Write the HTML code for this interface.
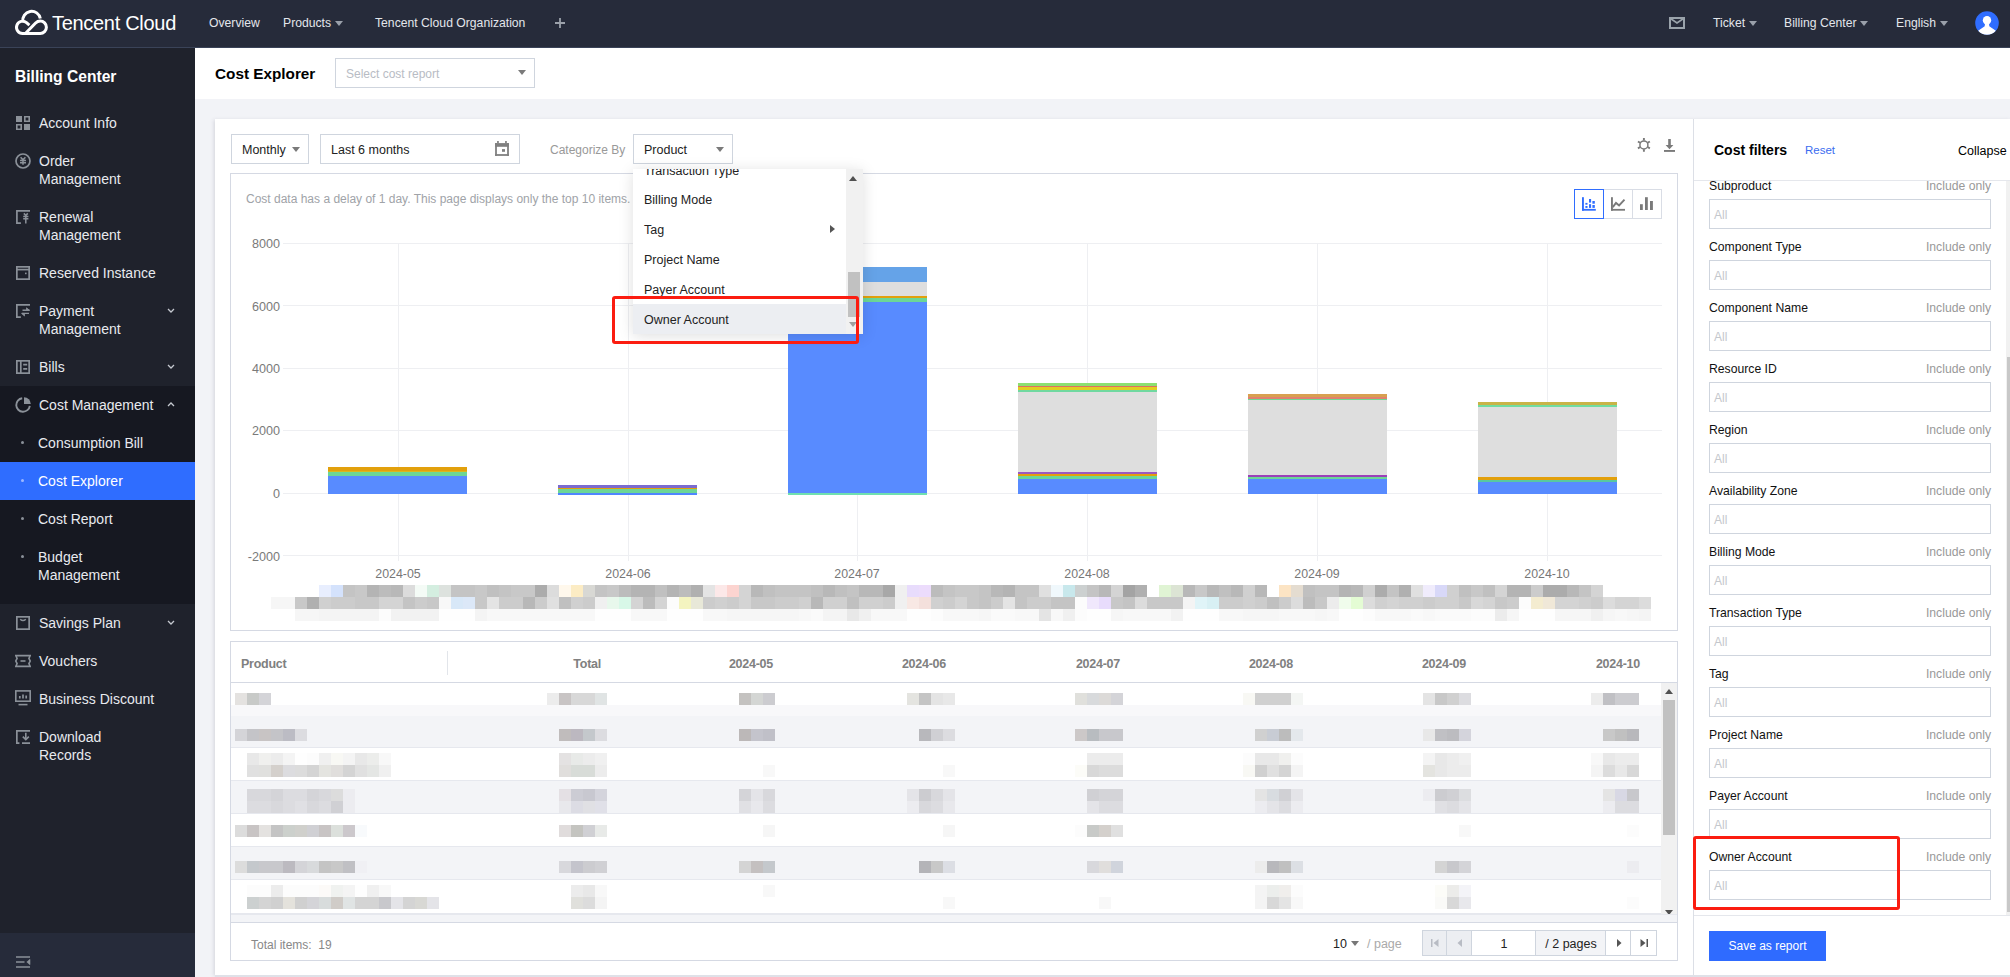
<!DOCTYPE html>
<html><head><meta charset="utf-8">
<style>
*{box-sizing:border-box;margin:0;padding:0}
html,body{width:2010px;height:977px;overflow:hidden;background:#f2f3f7;font-family:"Liberation Sans",sans-serif;color:#000}
.a{position:absolute}
#top{left:0;top:0;width:2010px;height:48px;background:#262b3a;border-bottom:1px solid #3a4358}
#top .n{position:absolute;top:16px;font-size:12.2px;color:#e3e6eb;white-space:nowrap}
.car{display:inline-block;width:0;height:0;border-left:4px solid transparent;border-right:4px solid transparent;border-top:5px solid #9aa0aa;vertical-align:middle;margin-left:4px}
#side{left:0;top:48px;width:195px;height:929px;background:#1f222c}
#side .it{position:absolute;left:39px;font-size:14px;color:#e8eaef;line-height:18px;white-space:nowrap}
#side .ic{position:absolute;left:16px;width:14px;height:14px}
#hdr{left:195px;top:48px;width:1815px;height:51px;background:#fff}
.tri{width:0;height:0;border-left:4px solid transparent;border-right:4px solid transparent;border-top:5px solid #7a7a7a}
.box{position:absolute;background:#fff;border:1px solid #cfd5de}
</style><style>
.ylab{left:240px;width:40px;text-align:right;font-size:12.6px;color:#7a7a7a;margin-top:0px}
.xlab{width:80px;text-align:center;font-size:12.4px;color:#777}
.th{font-size:12.5px;font-weight:bold;color:#808080;letter-spacing:-0.25px}
.flab{left:1709px;font-size:12.2px;color:#111}
.finc{left:1891px;width:100px;text-align:right;font-size:12.2px;color:#999}
.finp{left:1709px;width:282px;height:30px;border:1px solid #cfd5de;background:#fff}
.finp span{position:absolute;left:4px;top:8px;font-size:12px;color:#c4c7cc}
.ddi{left:11px;font-size:12.5px;color:#222;white-space:nowrap}
</style></head><body>
<div id="top" class="a">
  <svg class="a" style="left:0;top:0" width="50" height="48" viewBox="0 0 50 48" fill="none" stroke="#fff" stroke-width="3"><path d="M29.4 25.1L26.5 22.6A6.1 6.1 0 1 0 22.6 33.4H40.2A6.2 6.2 0 0 0 40.2 21Q37.6 21 35.6 23L25.6 33.2"/><path d="M22.9 21.6A8.7 8.7 0 0 1 40.3 18.6"/></svg>
  <svg class="a" style="left:1668px;top:16px" width="18" height="14" viewBox="0 0 18 14" fill="none" stroke="#9aa3ab" stroke-width="2"><rect x="2" y="2" width="14" height="10"/><path d="M2.5 2.5L9 7l6.5-4.5" stroke-width="1.6"/></svg>
  <svg class="a" style="left:1975px;top:11px" width="24" height="24" viewBox="0 0 24 24"><circle cx="12" cy="12" r="11.8" fill="#2f6dff"/><g fill="#fff"><ellipse cx="12" cy="9.2" rx="4.2" ry="4.3"/><path d="M10 12.6H14L14.3 15.2L20.85 19.8A11.8 11.8 0 0 1 3.15 19.8L9.7 15.2Z"/></g></svg>
  <div class="a" style="left:52px;top:12px;font-size:20px;color:#fff;letter-spacing:-0.3px">Tencent Cloud</div>
  <div class="n" style="left:209px">Overview</div>
  <div class="n" style="left:283px">Products<span class="car"></span></div>
  <div class="n" style="left:375px">Tencent Cloud Organization</div>
  <svg class="a" style="left:554px;top:17px" width="12" height="12" viewBox="0 0 12 12" stroke="#9ba1aa" stroke-width="1.8"><path d="M6 1v10M1 6h10"/></svg>
  <div class="n" style="left:1713px">Ticket<span class="car"></span></div>
  <div class="n" style="left:1784px">Billing Center<span class="car"></span></div>
  <div class="n" style="left:1896px">English<span class="car"></span></div>
  
</div>
<div id="side" class="a">
  <div class="a" style="left:15px;top:20px;font-size:15.6px;font-weight:bold;color:#fff">Billing Center</div>
  <div class="a" style="left:0;top:338px;width:195px;height:218px;background:#161821"></div>
  <div class="a" style="left:0;top:414px;width:195px;height:38px;background:#2f6dff"></div>
  <div class="a" style="left:0;top:885px;width:195px;height:44px;background:#262b3a"></div>
  <!-- icons -->
  <svg class="ic" style="top:68px" viewBox="0 0 14 14" fill="#8b9199"><rect x="0" y="0" width="6" height="6"/><path d="M8 0h6v6h-6zM9.6 1.6v2.8h2.8v-2.8z" fill-rule="evenodd"/><path d="M0 8h6v6h-6zM1.6 9.6v2.8h2.8v-2.8z" fill-rule="evenodd"/><rect x="8" y="8" width="6" height="6"/></svg>
  <svg class="ic" style="top:105px;left:15px;width:16px;height:16px" viewBox="0 0 16 16" fill="none" stroke="#8b9199" stroke-width="1.7"><circle cx="8" cy="8" r="7"/><path d="M5.6 4.2l2.4 2.6 2.4-2.6M5 7.4h6M5 9.7h6M8 6.8v5" stroke-width="1.5"/></svg>
  <svg class="ic" style="top:162px" viewBox="0 0 14 14" fill="none" stroke="#8b9199" stroke-width="1.7"><path d="M14 0.9H0.9v12.2h4"/><path d="M7.8 3.4l2 2 2-2M7.2 6.4h5.2M7.2 8.8h5.2M9.8 5.4v8" stroke-width="1.5"/></svg>
  <svg class="ic" style="top:218px" viewBox="0 0 14 14" fill="none" stroke="#8b9199" stroke-width="1.7"><rect x="0.85" y="0.85" width="12.3" height="12.3"/><path d="M0.85 3.6h12.3"/><rect x="9" y="6.6" width="1.6" height="1.6" fill="#8b9199" stroke="none"/></svg>
  <svg class="ic" style="top:256px" viewBox="0 0 14 14" fill="none" stroke="#8b9199" stroke-width="1.7"><path d="M14 0.85H0.85v12.3h4"/><path d="M6.5 6.3h7M13 9.4h-7" stroke-width="1.4"/><path d="M10.5 3.8l3 2.5h-3zM8.5 12l-3-2.6h3z" fill="#8b9199" stroke-width="0.8"/></svg>
  <svg class="ic" style="top:312px" viewBox="0 0 14 14" fill="none" stroke="#8b9199" stroke-width="1.7"><rect x="0.85" y="0.85" width="12.3" height="12.3"/><path d="M4.8 0.85v12.3M7.2 4.6h4M7.2 8.8h4"/></svg>
  <svg class="ic" style="top:349px;left:15px;width:16px;height:16px" viewBox="0 0 16 16"><path d="M7.2 1.2A6.8 6.8 0 1 0 14.8 8.8" fill="none" stroke="#8b9199" stroke-width="1.9"/><path d="M9 0.2V7h6.8A6.8 6.8 0 0 0 9 0.2z" fill="#8b9199"/></svg>
  <svg class="ic" style="top:568px" viewBox="0 0 14 14" fill="none" stroke="#8b9199" stroke-width="1.7"><rect x="0.85" y="0.85" width="12.3" height="12.3"/><path d="M4.2 3.2q2.8 2.6 5.6 0" stroke-width="1.5"/></svg>
  <svg class="ic" style="top:606px;left:15px;width:16px;height:14px" viewBox="0 0 16 14" fill="none" stroke="#8b9199" stroke-width="1.6"><path d="M0.8 1.6h14.4l-1.3 2.8 1.3 2.6-1.3 2.6 1.3 2.8H0.8l1.3-2.8L0.8 7l1.3-2.6z"/><path d="M5.5 7h5"/></svg>
  <svg class="ic" style="top:642px;left:15px;width:16px;height:16px" viewBox="0 0 16 16" fill="none" stroke="#8b9199" stroke-width="1.6"><rect x="0.8" y="0.9" width="14.4" height="10.3"/><path d="M3.5 14.6h9"/><path d="M4.8 8.5v-2.5M8 8.5v-4M11.2 8.5v-3" stroke-width="1.7"/></svg>
  <svg class="ic" style="top:682px" viewBox="0 0 14 14" fill="none" stroke="#8b9199" stroke-width="1.7"><path d="M14 0.85H0.85v12.3h2.6M6 13.1h8"/><path d="M9.8 2.8v6.6" stroke-width="1.6"/><path d="M6.8 6.6l3 3 3-3" stroke-width="1.6"/></svg>
  <svg class="a" style="left:16px;top:908px" width="15" height="12" viewBox="0 0 15 12" fill="none" stroke="#8b9199" stroke-width="1.6"><path d="M0 1h14M0 6h8.5M0 11h14"/><path d="M14 3.3l-3.2 2.7 3.2 2.7z" fill="#8b9199" stroke-width="0.6"/></svg>
  <!-- chevrons -->
  <svg class="a" style="left:167px;top:260px" width="8" height="5" viewBox="0 0 8 5" fill="none" stroke="#c5c9d0" stroke-width="1.3"><path d="M1 1l3 3 3-3"/></svg>
  <svg class="a" style="left:167px;top:316px" width="8" height="5" viewBox="0 0 8 5" fill="none" stroke="#c5c9d0" stroke-width="1.3"><path d="M1 1l3 3 3-3"/></svg>
  <svg class="a" style="left:167px;top:354px" width="8" height="5" viewBox="0 0 8 5" fill="none" stroke="#c5c9d0" stroke-width="1.3"><path d="M1 4l3-3 3 3"/></svg>
  <svg class="a" style="left:167px;top:572px" width="8" height="5" viewBox="0 0 8 5" fill="none" stroke="#c5c9d0" stroke-width="1.3"><path d="M1 1l3 3 3-3"/></svg>
  <!-- bullets -->
  <div class="a" style="left:21px;top:393px;width:3px;height:3px;background:#8a9099;border-radius:50%"></div>
  <div class="a" style="left:21px;top:431px;width:3px;height:3px;background:#9db8ff;border-radius:50%"></div>
  <div class="a" style="left:21px;top:469px;width:3px;height:3px;background:#8a9099;border-radius:50%"></div>
  <div class="a" style="left:21px;top:507px;width:3px;height:3px;background:#8a9099;border-radius:50%"></div>
  <!-- text -->
  <div class="it" style="top:66px">Account Info</div>
  <div class="it" style="top:104px">Order<br>Management</div>
  <div class="it" style="top:160px">Renewal<br>Management</div>
  <div class="it" style="top:216px">Reserved Instance</div>
  <div class="it" style="top:254px">Payment<br>Management</div>
  <div class="it" style="top:310px">Bills</div>
  <div class="it" style="top:348px">Cost Management</div>
  <div class="it" style="top:386px;left:38px">Consumption Bill</div>
  <div class="it" style="top:424px;left:38px;color:#fff">Cost Explorer</div>
  <div class="it" style="top:462px;left:38px">Cost Report</div>
  <div class="it" style="top:500px;left:38px">Budget<br>Management</div>
  <div class="it" style="top:566px">Savings Plan</div>
  <div class="it" style="top:604px">Vouchers</div>
  <div class="it" style="top:642px">Business Discount</div>
  <div class="it" style="top:680px">Download<br>Records</div>
</div>
<div id="hdr" class="a">
  <div class="a" style="left:20px;top:17px;font-size:15.3px;font-weight:bold">Cost Explorer</div>
  <div class="box" style="left:140px;top:10px;width:200px;height:30px">
    <div class="a" style="left:10px;top:8px;font-size:12px;color:#b8bcc4">Select cost report</div>
    <div class="a tri" style="left:182px;top:11px"></div>
  </div>
</div>
<!-- main card -->
<div class="a" style="left:215px;top:119px;width:1795px;height:856px;background:#fff;box-shadow:-1px 1px 4px rgba(54,58,80,0.16)"></div>
<div class="a" style="left:215px;top:975px;width:1795px;height:2px;background:#dfe1e8"></div>
<!-- toolbar -->
<div class="box" style="left:231px;top:134px;width:78px;height:30px">
  <div class="a" style="left:10px;top:8px;font-size:12.5px;color:#222">Monthly</div>
  <div class="a tri" style="left:60px;top:12px"></div>
</div>
<div class="box" style="left:320px;top:134px;width:200px;height:30px">
  <div class="a" style="left:10px;top:8px;font-size:12.5px;color:#222">Last 6 months</div>
  <svg class="a" style="left:173px;top:5px" width="18" height="18" fill="#808080"><rect x="1.1" y="3.1" width="13.8" height="3.7"/><rect x="1.1" y="3.1" width="1.8" height="12.8"/><rect x="13.1" y="3.1" width="1.8" height="12.8"/><rect x="1.1" y="14.1" width="13.8" height="1.8"/><rect x="3.1" y="1.0" width="1.7" height="2.5"/><rect x="11.1" y="1.0" width="1.7" height="2.5"/><rect x="8.0" y="9.1" width="3.0" height="2.7"/></svg>
</div>
<div class="a" style="left:550px;top:143px;font-size:12px;color:#999">Categorize By</div>
<div class="box" style="left:633px;top:134px;width:100px;height:30px">
  <div class="a" style="left:10px;top:8px;font-size:12.5px;color:#222">Product</div>
  <div class="a tri" style="left:82px;top:12px"></div>
</div>
<svg class="a" style="left:1636px;top:137px" width="16" height="16" viewBox="0 0 16 16" fill="none" stroke="#7a7a7a"><circle cx="7.9" cy="7.9" r="4" stroke-width="1.5"/><path d="M7.90 3.60L7.90 1.00M11.62 5.75L13.88 4.45M11.62 10.05L13.88 11.35M7.90 12.20L7.90 14.80M4.18 5.75L1.92 4.45M4.18 10.05L1.92 11.35" stroke-width="1.9"/></svg>
<svg class="a" style="left:1663px;top:138px" width="14" height="15" viewBox="0 0 14 15" fill="#7a7a7a"><rect x="5.2" y="1" width="2.6" height="7"/><path d="M2.6 7h7.8L6.5 11.2z"/><rect x="1" y="12" width="11" height="1.9"/></svg>
<!-- chart container -->
<div class="a" style="left:230px;top:173px;width:1448px;height:458px;border:1px solid #d5d9e3"></div>
<div class="a" style="left:246px;top:192px;font-size:12px;color:#a0a3a8">Cost data has a delay of 1 day. This page displays only the top 10 items.</div>
<div class="a" style="left:1574px;top:189px;width:88px;height:30px;border:1px solid #d9dde5"></div>
<div class="a" style="left:1603px;top:189px;width:1px;height:30px;background:#d9dde5"></div>
<div class="a" style="left:1632px;top:189px;width:1px;height:30px;background:#d9dde5"></div>
<div class="a" style="left:1574px;top:189px;width:30px;height:30px;border:1px solid #2f6dff"></div>
<svg class="a" style="left:1565px;top:182px" width="105" height="43"><g fill="#2f6dff"><rect x="17.0" y="15.2" width="1.9" height="13.5"/><rect x="17.0" y="26.9" width="13.8" height="1.8"/><rect x="20.4" y="20.9" width="2.1" height="1.8"/><rect x="20.4" y="24.0" width="2.1" height="1.9"/><rect x="24.0" y="17.0" width="2.1" height="3.6"/><rect x="24.0" y="22.2" width="2.1" height="3.7"/><rect x="27.4" y="19.0" width="2.4" height="2.7"/><rect x="27.4" y="23.0" width="2.4" height="2.9"/></g><g fill="#7a7a7a"><rect x="46.0" y="15.2" width="1.9" height="13.5"/><rect x="46.0" y="26.9" width="14.0" height="1.8"/><rect x="75.0" y="22.2" width="2.8" height="5.8"/><rect x="80.0" y="15.2" width="2.8" height="12.8"/><rect x="85.0" y="19.0" width="2.9" height="9.0"/></g><path d="M47.8 25.1L51.0 20.9L54.1 23.5L59.5 17.6" fill="none" stroke="#7a7a7a" stroke-width="1.9"/></svg>
<!-- table container -->
<div class="a" style="left:230px;top:641px;width:1448px;height:320px;border:1px solid #d5d9e3"></div>
<!-- filter panel -->
<div class="a" style="left:1693px;top:119px;width:1px;height:856px;background:#dcdfe6"></div>
<div class="a" style="left:1694px;top:180px;width:316px;height:1px;background:#e5e7ec"></div>
<div class="a" style="left:1714px;top:142px;font-size:14px;font-weight:bold;color:#000">Cost filters</div>
<div class="a" style="left:1805px;top:144px;font-size:11.5px;color:#3b6cf0">Reset</div>
<div class="a" style="left:1958px;top:144px;font-size:12.5px;color:#000">Collapse</div>
<div class="a" style="left:2006px;top:181px;width:4px;height:734px;background:#f1f1f1"></div>
<div class="a" style="left:2007px;top:357px;width:3px;height:555px;background:#c8c8c8"></div>
<div class="a" style="left:1694px;top:915px;width:316px;height:1px;background:#e5e7ec"></div>
<div class="a" style="left:1709px;top:931px;width:117px;height:30px;background:#2f6bff;color:#fff;font-size:12px;text-align:center;line-height:30px">Save as report</div>
<div class="a" style="left:283px;top:242.5px;width:1379px;height:1px;background:#eeeff2"></div>
<div class="a ylab" style="top:237px">8000</div>
<div class="a" style="left:283px;top:305.0px;width:1379px;height:1px;background:#eeeff2"></div>
<div class="a ylab" style="top:300px">6000</div>
<div class="a" style="left:283px;top:367.5px;width:1379px;height:1px;background:#eeeff2"></div>
<div class="a ylab" style="top:362px">4000</div>
<div class="a" style="left:283px;top:430.0px;width:1379px;height:1px;background:#eeeff2"></div>
<div class="a ylab" style="top:424px">2000</div>
<div class="a" style="left:283px;top:492.5px;width:1379px;height:1px;background:#eeeff2"></div>
<div class="a ylab" style="top:487px">0</div>
<div class="a" style="left:283px;top:555.0px;width:1379px;height:1px;background:#eeeff2"></div>
<div class="a ylab" style="top:550px">-2000</div>
<div class="a" style="left:398px;top:243px;width:1px;height:318px;background:#eeeff2"></div>
<div class="a xlab" style="left:358px;top:567px">2024-05</div>
<div class="a" style="left:628px;top:243px;width:1px;height:318px;background:#eeeff2"></div>
<div class="a xlab" style="left:588px;top:567px">2024-06</div>
<div class="a" style="left:857px;top:243px;width:1px;height:318px;background:#eeeff2"></div>
<div class="a xlab" style="left:817px;top:567px">2024-07</div>
<div class="a" style="left:1087px;top:243px;width:1px;height:318px;background:#eeeff2"></div>
<div class="a xlab" style="left:1047px;top:567px">2024-08</div>
<div class="a" style="left:1317px;top:243px;width:1px;height:318px;background:#eeeff2"></div>
<div class="a xlab" style="left:1277px;top:567px">2024-09</div>
<div class="a" style="left:1547px;top:243px;width:1px;height:318px;background:#eeeff2"></div>
<div class="a xlab" style="left:1507px;top:567px">2024-10</div>
<div class="a" style="left:328px;top:467.0px;width:139px;height:3.5px;background:#e2a00c"></div>
<div class="a" style="left:328px;top:470.5px;width:139px;height:1.5px;background:#d8b820"></div>
<div class="a" style="left:328px;top:472.0px;width:139px;height:4.0px;background:#6cd696"></div>
<div class="a" style="left:328px;top:476.0px;width:139px;height:18.0px;background:#588bff"></div>
<div class="a" style="left:558px;top:485.0px;width:139px;height:3.0px;background:#7b6bd0"></div>
<div class="a" style="left:558px;top:488.0px;width:139px;height:1.0px;background:#e2a00c"></div>
<div class="a" style="left:558px;top:489.0px;width:139px;height:4.0px;background:#6cd696"></div>
<div class="a" style="left:558px;top:493.0px;width:139px;height:2.0px;background:#4f86ff"></div>
<div class="a" style="left:788px;top:266.5px;width:139px;height:15.5px;background:#65a3e8"></div>
<div class="a" style="left:788px;top:282.0px;width:139px;height:14.0px;background:#dedede"></div>
<div class="a" style="left:788px;top:296.0px;width:139px;height:2.0px;background:#e2a00c"></div>
<div class="a" style="left:788px;top:298.0px;width:139px;height:4.0px;background:#6cd696"></div>
<div class="a" style="left:788px;top:302.0px;width:139px;height:191.0px;background:#588bff"></div>
<div class="a" style="left:788px;top:493.0px;width:139px;height:2.0px;background:#6fe0b0"></div>
<div class="a" style="left:1018px;top:383.0px;width:139px;height:3.0px;background:#8ce070"></div>
<div class="a" style="left:1018px;top:386.0px;width:139px;height:1.0px;background:#e07060"></div>
<div class="a" style="left:1018px;top:387.0px;width:139px;height:3.0px;background:#e0d020"></div>
<div class="a" style="left:1018px;top:390.0px;width:139px;height:2.0px;background:#70d8a0"></div>
<div class="a" style="left:1018px;top:392.0px;width:139px;height:80.0px;background:#dedede"></div>
<div class="a" style="left:1018px;top:472.0px;width:139px;height:2.0px;background:#9b58c0"></div>
<div class="a" style="left:1018px;top:474.0px;width:139px;height:2.0px;background:#e2a00c"></div>
<div class="a" style="left:1018px;top:476.0px;width:139px;height:3.0px;background:#6cd696"></div>
<div class="a" style="left:1018px;top:479.0px;width:139px;height:15.0px;background:#588bff"></div>
<div class="a" style="left:1248px;top:394.0px;width:139px;height:3.0px;background:#d8a050"></div>
<div class="a" style="left:1248px;top:397.0px;width:139px;height:1.5px;background:#e08070"></div>
<div class="a" style="left:1248px;top:398.5px;width:139px;height:1.0px;background:#70d890"></div>
<div class="a" style="left:1248px;top:399.5px;width:139px;height:75.5px;background:#dedede"></div>
<div class="a" style="left:1248px;top:475.0px;width:139px;height:2.0px;background:#9b40b8"></div>
<div class="a" style="left:1248px;top:477.0px;width:139px;height:2.0px;background:#6cd696"></div>
<div class="a" style="left:1248px;top:479.0px;width:139px;height:15.0px;background:#588bff"></div>
<div class="a" style="left:1478px;top:402.0px;width:139px;height:3.0px;background:#c8b448"></div>
<div class="a" style="left:1478px;top:405.0px;width:139px;height:2.0px;background:#70dca0"></div>
<div class="a" style="left:1478px;top:407.0px;width:139px;height:70.0px;background:#dedede"></div>
<div class="a" style="left:1478px;top:477.0px;width:139px;height:3.0px;background:#e2a00c"></div>
<div class="a" style="left:1478px;top:480.0px;width:139px;height:1.5px;background:#58c8a0"></div>
<div class="a" style="left:1478px;top:481.5px;width:139px;height:12.5px;background:#588bff"></div>
<svg class="a" style="left:235px;top:585px" width="1430" height="36" shape-rendering="crispEdges"><rect x="84" y="0" width="12" height="12" fill="#e8eefe"/><rect x="96" y="0" width="12" height="12" fill="#d4e2fc"/><rect x="108" y="0" width="12" height="12" fill="#c4c4c4"/><rect x="120" y="0" width="12" height="12" fill="#c8c8c8"/><rect x="132" y="0" width="12" height="12" fill="#b4b4b4"/><rect x="144" y="0" width="12" height="12" fill="#bcbcbc"/><rect x="156" y="0" width="12" height="12" fill="#b8b8b8"/><rect x="168" y="0" width="12" height="12" fill="#dcdcdc"/><rect x="180" y="0" width="12" height="12" fill="#f4fbf6"/><rect x="192" y="0" width="12" height="12" fill="#d4eee0"/><rect x="204" y="0" width="12" height="12" fill="#dde2de"/><rect x="216" y="0" width="12" height="12" fill="#c4c4c4"/><rect x="228" y="0" width="12" height="12" fill="#c4c4c4"/><rect x="240" y="0" width="12" height="12" fill="#c8c8c8"/><rect x="252" y="0" width="12" height="12" fill="#c0c0c0"/><rect x="264" y="0" width="12" height="12" fill="#c4c4c4"/><rect x="276" y="0" width="12" height="12" fill="#c8c8c8"/><rect x="288" y="0" width="12" height="12" fill="#c8c8c8"/><rect x="300" y="0" width="12" height="12" fill="#acacac"/><rect x="312" y="0" width="12" height="12" fill="#dcdcdc"/><rect x="324" y="0" width="12" height="12" fill="#fff8ec"/><rect x="336" y="0" width="12" height="12" fill="#fcecc4"/><rect x="348" y="0" width="12" height="12" fill="#d8d8d4"/><rect x="360" y="0" width="12" height="12" fill="#c4c4c4"/><rect x="372" y="0" width="12" height="12" fill="#c8c8c8"/><rect x="384" y="0" width="12" height="12" fill="#bcbcbc"/><rect x="396" y="0" width="12" height="12" fill="#b4b4b4"/><rect x="408" y="0" width="12" height="12" fill="#b4b4b4"/><rect x="420" y="0" width="12" height="12" fill="#c0c0c0"/><rect x="432" y="0" width="12" height="12" fill="#b4b4b4"/><rect x="444" y="0" width="12" height="12" fill="#bcbcbc"/><rect x="456" y="0" width="12" height="12" fill="#b0b0b0"/><rect x="468" y="0" width="12" height="12" fill="#e4e4e4"/><rect x="480" y="0" width="12" height="12" fill="#fce8e8"/><rect x="492" y="0" width="12" height="12" fill="#fcd4d0"/><rect x="504" y="0" width="12" height="12" fill="#d4d4d4"/><rect x="516" y="0" width="12" height="12" fill="#b8b8b8"/><rect x="528" y="0" width="12" height="12" fill="#c0c0c0"/><rect x="540" y="0" width="12" height="12" fill="#c4c4c4"/><rect x="552" y="0" width="12" height="12" fill="#c4c4c4"/><rect x="564" y="0" width="12" height="12" fill="#c4c4c4"/><rect x="576" y="0" width="12" height="12" fill="#c0c0c0"/><rect x="588" y="0" width="12" height="12" fill="#b8b8b8"/><rect x="600" y="0" width="12" height="12" fill="#c0c0c0"/><rect x="612" y="0" width="12" height="12" fill="#c4c4c4"/><rect x="624" y="0" width="12" height="12" fill="#b8b8b8"/><rect x="636" y="0" width="12" height="12" fill="#b8b8b8"/><rect x="648" y="0" width="12" height="12" fill="#a8a8a8"/><rect x="660" y="0" width="12" height="12" fill="#f0f0f0"/><rect x="672" y="0" width="12" height="12" fill="#e8dcfc"/><rect x="684" y="0" width="12" height="12" fill="#ecdcfc"/><rect x="696" y="0" width="12" height="12" fill="#bcbcbc"/><rect x="708" y="0" width="12" height="12" fill="#c4c4c4"/><rect x="720" y="0" width="12" height="12" fill="#c8c8c8"/><rect x="732" y="0" width="12" height="12" fill="#c8c8c8"/><rect x="744" y="0" width="12" height="12" fill="#c4c4c4"/><rect x="756" y="0" width="12" height="12" fill="#b8b8b8"/><rect x="768" y="0" width="12" height="12" fill="#b4b4b4"/><rect x="780" y="0" width="12" height="12" fill="#c4c4c4"/><rect x="792" y="0" width="12" height="12" fill="#c4c4c4"/><rect x="804" y="0" width="12" height="12" fill="#e0e0e0"/><rect x="816" y="0" width="12" height="12" fill="#f0f8fc"/><rect x="828" y="0" width="12" height="12" fill="#c8e8ec"/><rect x="840" y="0" width="12" height="12" fill="#ccd0d0"/><rect x="852" y="0" width="12" height="12" fill="#c4c4c4"/><rect x="864" y="0" width="12" height="12" fill="#b8b8b8"/><rect x="876" y="0" width="12" height="12" fill="#d4d4d4"/><rect x="888" y="0" width="12" height="12" fill="#a4a4a4"/><rect x="900" y="0" width="12" height="12" fill="#b0b0b0"/><rect x="924" y="0" width="12" height="12" fill="#e0f4d4"/><rect x="936" y="0" width="12" height="12" fill="#dce4d4"/><rect x="948" y="0" width="12" height="12" fill="#b8b8b8"/><rect x="960" y="0" width="12" height="12" fill="#c8c8c8"/><rect x="972" y="0" width="12" height="12" fill="#b8b8b8"/><rect x="984" y="0" width="12" height="12" fill="#c0c0c0"/><rect x="996" y="0" width="12" height="12" fill="#b8b8b8"/><rect x="1008" y="0" width="12" height="12" fill="#d0d0d0"/><rect x="1020" y="0" width="12" height="12" fill="#b8b8b8"/><rect x="1044" y="0" width="12" height="12" fill="#fce4c4"/><rect x="1056" y="0" width="12" height="12" fill="#e4dcd0"/><rect x="1068" y="0" width="12" height="12" fill="#c0c0c0"/><rect x="1080" y="0" width="12" height="12" fill="#c4c4c4"/><rect x="1092" y="0" width="12" height="12" fill="#c4c4c4"/><rect x="1104" y="0" width="12" height="12" fill="#b4b4b4"/><rect x="1116" y="0" width="12" height="12" fill="#b8b8b8"/><rect x="1128" y="0" width="12" height="12" fill="#d0d0d0"/><rect x="1140" y="0" width="12" height="12" fill="#acacac"/><rect x="1152" y="0" width="12" height="12" fill="#c4c4c4"/><rect x="1164" y="0" width="12" height="12" fill="#b0b0b0"/><rect x="1176" y="0" width="12" height="12" fill="#e0e0e0"/><rect x="1188" y="0" width="12" height="12" fill="#f0ecfc"/><rect x="1200" y="0" width="12" height="12" fill="#d8d8f8"/><rect x="1212" y="0" width="12" height="12" fill="#d0d0d0"/><rect x="1224" y="0" width="12" height="12" fill="#c0c0c0"/><rect x="1236" y="0" width="12" height="12" fill="#c8c8c8"/><rect x="1248" y="0" width="12" height="12" fill="#c0c0c0"/><rect x="1260" y="0" width="12" height="12" fill="#d4d4d4"/><rect x="1272" y="0" width="12" height="12" fill="#b4b4b4"/><rect x="1284" y="0" width="12" height="12" fill="#b4b4b4"/><rect x="1296" y="0" width="12" height="12" fill="#cccccc"/><rect x="1308" y="0" width="12" height="12" fill="#acacac"/><rect x="1320" y="0" width="12" height="12" fill="#acacac"/><rect x="1332" y="0" width="12" height="12" fill="#b8b8b8"/><rect x="1344" y="0" width="12" height="12" fill="#c4c4c4"/><rect x="1356" y="0" width="12" height="12" fill="#d4d4d4"/><rect x="36" y="12" width="12" height="12" fill="#f6f6f6"/><rect x="48" y="12" width="12" height="12" fill="#f6f6f6"/><rect x="60" y="12" width="12" height="12" fill="#c8c8c8"/><rect x="72" y="12" width="12" height="12" fill="#b0b0b0"/><rect x="84" y="12" width="12" height="12" fill="#d0d0d0"/><rect x="96" y="12" width="12" height="12" fill="#cccccc"/><rect x="108" y="12" width="12" height="12" fill="#cccccc"/><rect x="120" y="12" width="12" height="12" fill="#c8c8c8"/><rect x="132" y="12" width="12" height="12" fill="#c8c8c8"/><rect x="144" y="12" width="12" height="12" fill="#d4d4d4"/><rect x="156" y="12" width="12" height="12" fill="#d4d4d4"/><rect x="168" y="12" width="12" height="12" fill="#c4c4c4"/><rect x="180" y="12" width="12" height="12" fill="#cccccc"/><rect x="192" y="12" width="12" height="12" fill="#c8c8c8"/><rect x="204" y="12" width="12" height="12" fill="#f8f8f8"/><rect x="216" y="12" width="12" height="12" fill="#d8e8f8"/><rect x="228" y="12" width="12" height="12" fill="#dce8f8"/><rect x="240" y="12" width="12" height="12" fill="#c8c8c8"/><rect x="252" y="12" width="12" height="12" fill="#e4e4e4"/><rect x="264" y="12" width="12" height="12" fill="#cccccc"/><rect x="276" y="12" width="12" height="12" fill="#cccccc"/><rect x="288" y="12" width="12" height="12" fill="#b8b8b8"/><rect x="300" y="12" width="12" height="12" fill="#cccccc"/><rect x="312" y="12" width="12" height="12" fill="#e0e0e0"/><rect x="324" y="12" width="12" height="12" fill="#c0c0c0"/><rect x="336" y="12" width="12" height="12" fill="#d0d0d0"/><rect x="348" y="12" width="12" height="12" fill="#cccccc"/><rect x="360" y="12" width="12" height="12" fill="#f0f0f0"/><rect x="372" y="12" width="12" height="12" fill="#e8f8ec"/><rect x="384" y="12" width="12" height="12" fill="#d8f8e8"/><rect x="396" y="12" width="12" height="12" fill="#d4d4d4"/><rect x="408" y="12" width="12" height="12" fill="#bcbcbc"/><rect x="420" y="12" width="12" height="12" fill="#d4d4d4"/><rect x="432" y="12" width="12" height="12" fill="#fcfcfc"/><rect x="444" y="12" width="12" height="12" fill="#f4f4c0"/><rect x="456" y="12" width="12" height="12" fill="#e8e8d8"/><rect x="468" y="12" width="12" height="12" fill="#cccccc"/><rect x="480" y="12" width="12" height="12" fill="#d0d0d0"/><rect x="492" y="12" width="12" height="12" fill="#cccccc"/><rect x="504" y="12" width="12" height="12" fill="#d4d4d4"/><rect x="516" y="12" width="12" height="12" fill="#c8c8c8"/><rect x="528" y="12" width="12" height="12" fill="#c8c8c8"/><rect x="540" y="12" width="12" height="12" fill="#cccccc"/><rect x="552" y="12" width="12" height="12" fill="#cccccc"/><rect x="564" y="12" width="12" height="12" fill="#d0d0d0"/><rect x="576" y="12" width="12" height="12" fill="#b8b8b8"/><rect x="588" y="12" width="12" height="12" fill="#d0d0d0"/><rect x="600" y="12" width="12" height="12" fill="#d0d0d0"/><rect x="612" y="12" width="12" height="12" fill="#c0c0c0"/><rect x="624" y="12" width="12" height="12" fill="#d0d0d0"/><rect x="636" y="12" width="12" height="12" fill="#d0d0d0"/><rect x="648" y="12" width="12" height="12" fill="#cccccc"/><rect x="660" y="12" width="12" height="12" fill="#f0f0f0"/><rect x="672" y="12" width="12" height="12" fill="#f8e8e4"/><rect x="684" y="12" width="12" height="12" fill="#f4e0dc"/><rect x="696" y="12" width="12" height="12" fill="#d0d0d0"/><rect x="708" y="12" width="12" height="12" fill="#cccccc"/><rect x="720" y="12" width="12" height="12" fill="#d4d4d4"/><rect x="732" y="12" width="12" height="12" fill="#c8c8c8"/><rect x="744" y="12" width="12" height="12" fill="#c4c4c4"/><rect x="756" y="12" width="12" height="12" fill="#cccccc"/><rect x="768" y="12" width="12" height="12" fill="#e4e4e4"/><rect x="780" y="12" width="12" height="12" fill="#c4c4c4"/><rect x="792" y="12" width="12" height="12" fill="#cccccc"/><rect x="804" y="12" width="12" height="12" fill="#cccccc"/><rect x="816" y="12" width="12" height="12" fill="#c4c4c4"/><rect x="828" y="12" width="12" height="12" fill="#c4c4c4"/><rect x="840" y="12" width="12" height="12" fill="#fcfcfc"/><rect x="852" y="12" width="12" height="12" fill="#f0e8fc"/><rect x="864" y="12" width="12" height="12" fill="#e8dcfc"/><rect x="876" y="12" width="12" height="12" fill="#c8c8c8"/><rect x="888" y="12" width="12" height="12" fill="#c4c4c4"/><rect x="900" y="12" width="12" height="12" fill="#dcdcdc"/><rect x="912" y="12" width="12" height="12" fill="#c8c8c8"/><rect x="924" y="12" width="12" height="12" fill="#c8c8c8"/><rect x="936" y="12" width="12" height="12" fill="#c8c8c8"/><rect x="948" y="12" width="12" height="12" fill="#f4f4f4"/><rect x="960" y="12" width="12" height="12" fill="#e0f4f8"/><rect x="972" y="12" width="12" height="12" fill="#d8f0f4"/><rect x="984" y="12" width="12" height="12" fill="#cccccc"/><rect x="996" y="12" width="12" height="12" fill="#cccccc"/><rect x="1008" y="12" width="12" height="12" fill="#d0d0d0"/><rect x="1020" y="12" width="12" height="12" fill="#cccccc"/><rect x="1032" y="12" width="12" height="12" fill="#c0c0c0"/><rect x="1044" y="12" width="12" height="12" fill="#cccccc"/><rect x="1056" y="12" width="12" height="12" fill="#dcdcdc"/><rect x="1068" y="12" width="12" height="12" fill="#bcbcbc"/><rect x="1080" y="12" width="12" height="12" fill="#c8c8c8"/><rect x="1092" y="12" width="12" height="12" fill="#ececec"/><rect x="1104" y="12" width="12" height="12" fill="#f0fcec"/><rect x="1116" y="12" width="12" height="12" fill="#e4fcd4"/><rect x="1128" y="12" width="12" height="12" fill="#dcdcdc"/><rect x="1140" y="12" width="12" height="12" fill="#d0d0d0"/><rect x="1152" y="12" width="12" height="12" fill="#d4d4d4"/><rect x="1164" y="12" width="12" height="12" fill="#d0d0d0"/><rect x="1176" y="12" width="12" height="12" fill="#d0d0d0"/><rect x="1188" y="12" width="12" height="12" fill="#cccccc"/><rect x="1200" y="12" width="12" height="12" fill="#d0d0d0"/><rect x="1212" y="12" width="12" height="12" fill="#d0d0d0"/><rect x="1224" y="12" width="12" height="12" fill="#c8c8c8"/><rect x="1236" y="12" width="12" height="12" fill="#d8d8d8"/><rect x="1248" y="12" width="12" height="12" fill="#d4d4d4"/><rect x="1260" y="12" width="12" height="12" fill="#c8c8c8"/><rect x="1272" y="12" width="12" height="12" fill="#cccccc"/><rect x="1284" y="12" width="12" height="12" fill="#fcfcfc"/><rect x="1296" y="12" width="12" height="12" fill="#f4ecd0"/><rect x="1308" y="12" width="12" height="12" fill="#f0e8d8"/><rect x="1320" y="12" width="12" height="12" fill="#d4d4d4"/><rect x="1332" y="12" width="12" height="12" fill="#d4d4d4"/><rect x="1344" y="12" width="12" height="12" fill="#d0d0d0"/><rect x="1356" y="12" width="12" height="12" fill="#cccccc"/><rect x="1368" y="12" width="12" height="12" fill="#dcdcdc"/><rect x="1380" y="12" width="12" height="12" fill="#d4d4d4"/><rect x="1392" y="12" width="12" height="12" fill="#d4d4d4"/><rect x="1404" y="12" width="12" height="12" fill="#dcdcdc"/><rect x="60" y="24" width="12" height="12" fill="#f6f6f6"/><rect x="72" y="24" width="12" height="12" fill="#f6f6f6"/><rect x="84" y="24" width="12" height="12" fill="#f4f4f4"/><rect x="96" y="24" width="12" height="12" fill="#f4f4f4"/><rect x="108" y="24" width="12" height="12" fill="#f4f4f4"/><rect x="120" y="24" width="12" height="12" fill="#f4f4f4"/><rect x="132" y="24" width="12" height="12" fill="#f4f4f4"/><rect x="144" y="24" width="12" height="12" fill="#fcfcfc"/><rect x="156" y="24" width="12" height="12" fill="#f2f2f2"/><rect x="168" y="24" width="12" height="12" fill="#f2f2f2"/><rect x="180" y="24" width="12" height="12" fill="#f2f2f2"/><rect x="192" y="24" width="12" height="12" fill="#f2f2f2"/><rect x="204" y="24" width="12" height="12" fill="#fefefe"/><rect x="216" y="24" width="12" height="12" fill="#fefefe"/><rect x="228" y="24" width="12" height="12" fill="#fefefe"/><rect x="240" y="24" width="12" height="12" fill="#f4f4f4"/><rect x="252" y="24" width="12" height="12" fill="#f8f8f8"/><rect x="264" y="24" width="12" height="12" fill="#f8f8f8"/><rect x="276" y="24" width="12" height="12" fill="#f8f8f8"/><rect x="288" y="24" width="12" height="12" fill="#f8f8f8"/><rect x="300" y="24" width="12" height="12" fill="#f8f8f8"/><rect x="312" y="24" width="12" height="12" fill="#f8f8f8"/><rect x="324" y="24" width="12" height="12" fill="#f8f8f8"/><rect x="336" y="24" width="12" height="12" fill="#f8f8f8"/><rect x="348" y="24" width="12" height="12" fill="#f8f8f8"/><rect x="360" y="24" width="12" height="12" fill="#fefefe"/><rect x="372" y="24" width="12" height="12" fill="#fefefe"/><rect x="384" y="24" width="12" height="12" fill="#fefefe"/><rect x="396" y="24" width="12" height="12" fill="#f8f8f8"/><rect x="408" y="24" width="12" height="12" fill="#f8f8f8"/><rect x="420" y="24" width="12" height="12" fill="#f8f8f8"/><rect x="432" y="24" width="12" height="12" fill="#fefefe"/><rect x="444" y="24" width="12" height="12" fill="#fefefe"/><rect x="456" y="24" width="12" height="12" fill="#fefefe"/><rect x="468" y="24" width="12" height="12" fill="#f8f8f8"/><rect x="480" y="24" width="12" height="12" fill="#f8f8f8"/><rect x="492" y="24" width="12" height="12" fill="#f6f6f6"/><rect x="504" y="24" width="12" height="12" fill="#f6f6f6"/><rect x="516" y="24" width="12" height="12" fill="#f6f6f6"/><rect x="528" y="24" width="12" height="12" fill="#f6f6f6"/><rect x="540" y="24" width="12" height="12" fill="#f6f6f6"/><rect x="552" y="24" width="12" height="12" fill="#f6f6f6"/><rect x="564" y="24" width="12" height="12" fill="#f8f8f8"/><rect x="576" y="24" width="12" height="12" fill="#fafafa"/><rect x="588" y="24" width="12" height="12" fill="#f4f4f4"/><rect x="600" y="24" width="12" height="12" fill="#f4f4f4"/><rect x="612" y="24" width="12" height="12" fill="#e8e8e8"/><rect x="624" y="24" width="12" height="12" fill="#f0f0f0"/><rect x="636" y="24" width="12" height="12" fill="#f8f8f8"/><rect x="648" y="24" width="12" height="12" fill="#f8f8f8"/><rect x="660" y="24" width="12" height="12" fill="#f8f8f8"/><rect x="672" y="24" width="12" height="12" fill="#fefefe"/><rect x="684" y="24" width="12" height="12" fill="#fefefe"/><rect x="696" y="24" width="12" height="12" fill="#fcfcfc"/><rect x="708" y="24" width="12" height="12" fill="#f8f8f8"/><rect x="720" y="24" width="12" height="12" fill="#f8f8f8"/><rect x="732" y="24" width="12" height="12" fill="#f8f8f8"/><rect x="744" y="24" width="12" height="12" fill="#f6f6f6"/><rect x="756" y="24" width="12" height="12" fill="#fafafa"/><rect x="768" y="24" width="12" height="12" fill="#fafafa"/><rect x="780" y="24" width="12" height="12" fill="#f8f8f8"/><rect x="792" y="24" width="12" height="12" fill="#f8f8f8"/><rect x="804" y="24" width="12" height="12" fill="#e4e4e4"/><rect x="816" y="24" width="12" height="12" fill="#f8f8f8"/><rect x="828" y="24" width="12" height="12" fill="#f0f0f0"/><rect x="840" y="24" width="12" height="12" fill="#fcfcfc"/><rect x="852" y="24" width="12" height="12" fill="#fefefe"/><rect x="864" y="24" width="12" height="12" fill="#fefefe"/><rect x="876" y="24" width="12" height="12" fill="#f6f6f6"/><rect x="888" y="24" width="12" height="12" fill="#f8f8f8"/><rect x="900" y="24" width="12" height="12" fill="#f8f8f8"/><rect x="912" y="24" width="12" height="12" fill="#f8f8f8"/><rect x="924" y="24" width="12" height="12" fill="#f8f8f8"/><rect x="936" y="24" width="12" height="12" fill="#f2f2f2"/><rect x="948" y="24" width="12" height="12" fill="#fefefe"/><rect x="960" y="24" width="12" height="12" fill="#fefefe"/><rect x="972" y="24" width="12" height="12" fill="#fefefe"/><rect x="984" y="24" width="12" height="12" fill="#f8f8f8"/><rect x="996" y="24" width="12" height="12" fill="#f8f8f8"/><rect x="1008" y="24" width="12" height="12" fill="#f6f6f6"/><rect x="1020" y="24" width="12" height="12" fill="#f6f6f6"/><rect x="1032" y="24" width="12" height="12" fill="#f6f6f6"/><rect x="1044" y="24" width="12" height="12" fill="#f8f8f8"/><rect x="1056" y="24" width="12" height="12" fill="#f8f8f8"/><rect x="1068" y="24" width="12" height="12" fill="#f8f8f8"/><rect x="1080" y="24" width="12" height="12" fill="#f6f6f6"/><rect x="1092" y="24" width="12" height="12" fill="#f8f8f8"/><rect x="1104" y="24" width="12" height="12" fill="#fefefe"/><rect x="1116" y="24" width="12" height="12" fill="#fefefe"/><rect x="1128" y="24" width="12" height="12" fill="#fcfcfc"/><rect x="1140" y="24" width="12" height="12" fill="#f8f8f8"/><rect x="1152" y="24" width="12" height="12" fill="#f8f8f8"/><rect x="1164" y="24" width="12" height="12" fill="#f8f8f8"/><rect x="1176" y="24" width="12" height="12" fill="#fafafa"/><rect x="1188" y="24" width="12" height="12" fill="#f8f8f8"/><rect x="1200" y="24" width="12" height="12" fill="#fafafa"/><rect x="1212" y="24" width="12" height="12" fill="#fafafa"/><rect x="1224" y="24" width="12" height="12" fill="#fafafa"/><rect x="1236" y="24" width="12" height="12" fill="#fcfcfc"/><rect x="1248" y="24" width="12" height="12" fill="#fcfcfc"/><rect x="1260" y="24" width="12" height="12" fill="#ececec"/><rect x="1272" y="24" width="12" height="12" fill="#f6f6f6"/><rect x="1284" y="24" width="12" height="12" fill="#fefefe"/><rect x="1296" y="24" width="12" height="12" fill="#fefefe"/><rect x="1308" y="24" width="12" height="12" fill="#fefefe"/><rect x="1320" y="24" width="12" height="12" fill="#f6f6f6"/><rect x="1332" y="24" width="12" height="12" fill="#f6f6f6"/><rect x="1344" y="24" width="12" height="12" fill="#f6f6f6"/><rect x="1356" y="24" width="12" height="12" fill="#f0f0f0"/><rect x="1368" y="24" width="12" height="12" fill="#f6f6f6"/><rect x="1380" y="24" width="12" height="12" fill="#f8f8f8"/><rect x="1392" y="24" width="12" height="12" fill="#f6f6f6"/><rect x="1404" y="24" width="12" height="12" fill="#f4f4f4"/></svg>
<div class="a" style="left:231px;top:682px;width:1446px;height:1px;background:#d5d9e3"></div>
<div class="a" style="left:447px;top:651px;width:1px;height:24px;background:#e2e5ea"></div>
<div class="a th" style="left:241px;top:657px">Product</div>
<div class="a th" style="left:501px;top:657px;width:100px;text-align:right">Total</div>
<div class="a th" style="left:673px;top:657px;width:100px;text-align:right">2024-05</div>
<div class="a th" style="left:846px;top:657px;width:100px;text-align:right">2024-06</div>
<div class="a th" style="left:1020px;top:657px;width:100px;text-align:right">2024-07</div>
<div class="a th" style="left:1193px;top:657px;width:100px;text-align:right">2024-08</div>
<div class="a th" style="left:1366px;top:657px;width:100px;text-align:right">2024-09</div>
<div class="a th" style="left:1540px;top:657px;width:100px;text-align:right">2024-10</div>
<div class="a" style="left:231px;top:683px;width:1430px;height:33px;background:#fff;border-bottom:1px solid #e6e8ee"></div>
<div class="a" style="left:231px;top:716px;width:1430px;height:32px;background:#f3f4f7;border-bottom:1px solid #e6e8ee"></div>
<div class="a" style="left:231px;top:748px;width:1430px;height:33px;background:#fff;border-bottom:1px solid #e6e8ee"></div>
<div class="a" style="left:231px;top:781px;width:1430px;height:33px;background:#f3f4f7;border-bottom:1px solid #e6e8ee"></div>
<div class="a" style="left:231px;top:814px;width:1430px;height:33px;background:#fff;border-bottom:1px solid #e6e8ee"></div>
<div class="a" style="left:231px;top:847px;width:1430px;height:33px;background:#f3f4f7;border-bottom:1px solid #e6e8ee"></div>
<div class="a" style="left:231px;top:880px;width:1430px;height:34px;background:#fff;border-bottom:1px solid #e6e8ee"></div>
<div class="a" style="left:231px;top:705px;width:1430px;height:11px;background:#f8f8fa"></div>
<svg class="a" style="left:235px;top:693px" width="1420" height="216" shape-rendering="crispEdges"><rect x="0" y="0" width="12" height="12" fill="#e4e2e0"/><rect x="12" y="0" width="12" height="12" fill="#c8cac8"/><rect x="24" y="0" width="12" height="12" fill="#d4d4d8"/><rect x="312" y="0" width="12" height="12" fill="#ececec"/><rect x="324" y="0" width="12" height="12" fill="#c8c4c4"/><rect x="336" y="0" width="12" height="12" fill="#d8d8d8"/><rect x="348" y="0" width="12" height="12" fill="#d8d8d8"/><rect x="360" y="0" width="12" height="12" fill="#e0e4e4"/><rect x="504" y="0" width="12" height="12" fill="#c4c2c0"/><rect x="516" y="0" width="12" height="12" fill="#d4d6d4"/><rect x="528" y="0" width="12" height="12" fill="#ccccd0"/><rect x="672" y="0" width="12" height="12" fill="#e4e4e0"/><rect x="684" y="0" width="12" height="12" fill="#c4c4c4"/><rect x="696" y="0" width="12" height="12" fill="#e4e4e4"/><rect x="708" y="0" width="12" height="12" fill="#e8e8e8"/><rect x="840" y="0" width="12" height="12" fill="#e0e0dc"/><rect x="852" y="0" width="12" height="12" fill="#d8dadc"/><rect x="864" y="0" width="12" height="12" fill="#dcdad8"/><rect x="876" y="0" width="12" height="12" fill="#d4d4d8"/><rect x="1008" y="0" width="12" height="12" fill="#f8f8f4"/><rect x="1020" y="0" width="12" height="12" fill="#d0d0d0"/><rect x="1032" y="0" width="12" height="12" fill="#d0d0d0"/><rect x="1044" y="0" width="12" height="12" fill="#d0d0d0"/><rect x="1056" y="0" width="12" height="12" fill="#f4f6f4"/><rect x="1188" y="0" width="12" height="12" fill="#e4e4e4"/><rect x="1200" y="0" width="12" height="12" fill="#c8c8c8"/><rect x="1212" y="0" width="12" height="12" fill="#d0d0d0"/><rect x="1224" y="0" width="12" height="12" fill="#dcdce0"/><rect x="1356" y="0" width="12" height="12" fill="#ececec"/><rect x="1368" y="0" width="12" height="12" fill="#c0c0c4"/><rect x="1380" y="0" width="12" height="12" fill="#ccccd0"/><rect x="1392" y="0" width="12" height="12" fill="#ccccd0"/><rect x="0" y="36" width="12" height="12" fill="#d4d4d8"/><rect x="12" y="36" width="12" height="12" fill="#c4c4c8"/><rect x="24" y="36" width="12" height="12" fill="#c8c4c4"/><rect x="36" y="36" width="12" height="12" fill="#c4c4c8"/><rect x="48" y="36" width="12" height="12" fill="#bcbcc4"/><rect x="60" y="36" width="12" height="12" fill="#dcdce0"/><rect x="324" y="36" width="12" height="12" fill="#c0bcbc"/><rect x="336" y="36" width="12" height="12" fill="#bcb8c0"/><rect x="348" y="36" width="12" height="12" fill="#c4c8cc"/><rect x="360" y="36" width="12" height="12" fill="#dcdce0"/><rect x="504" y="36" width="12" height="12" fill="#bcb8b8"/><rect x="516" y="36" width="12" height="12" fill="#c4c4cc"/><rect x="528" y="36" width="12" height="12" fill="#c0c0c8"/><rect x="684" y="36" width="12" height="12" fill="#b8b8bc"/><rect x="696" y="36" width="12" height="12" fill="#d0d0d4"/><rect x="708" y="36" width="12" height="12" fill="#dcdce0"/><rect x="840" y="36" width="12" height="12" fill="#ccc8c8"/><rect x="852" y="36" width="12" height="12" fill="#b8bcc0"/><rect x="864" y="36" width="12" height="12" fill="#c8c8cc"/><rect x="876" y="36" width="12" height="12" fill="#c8c8cc"/><rect x="1020" y="36" width="12" height="12" fill="#d0d0d0"/><rect x="1032" y="36" width="12" height="12" fill="#c8ccd4"/><rect x="1044" y="36" width="12" height="12" fill="#bcbcbc"/><rect x="1056" y="36" width="12" height="12" fill="#e4e8ec"/><rect x="1188" y="36" width="12" height="12" fill="#e8e8e8"/><rect x="1200" y="36" width="12" height="12" fill="#c0c0c4"/><rect x="1212" y="36" width="12" height="12" fill="#bcbcc0"/><rect x="1224" y="36" width="12" height="12" fill="#d4d4dc"/><rect x="1368" y="36" width="12" height="12" fill="#c8c8c8"/><rect x="1380" y="36" width="12" height="12" fill="#c0c0c0"/><rect x="1392" y="36" width="12" height="12" fill="#b8b8bc"/><rect x="12" y="60" width="12" height="12" fill="#e8e8e8"/><rect x="24" y="60" width="12" height="12" fill="#f0f0ee"/><rect x="36" y="60" width="12" height="12" fill="#ececec"/><rect x="48" y="60" width="12" height="12" fill="#f4f4f4"/><rect x="60" y="60" width="12" height="12" fill="#fefefe"/><rect x="72" y="60" width="12" height="12" fill="#fcfcfc"/><rect x="84" y="60" width="12" height="12" fill="#f0f0f0"/><rect x="96" y="60" width="12" height="12" fill="#f8f8f4"/><rect x="108" y="60" width="12" height="12" fill="#f4f4f4"/><rect x="120" y="60" width="12" height="12" fill="#e8e8e8"/><rect x="132" y="60" width="12" height="12" fill="#ecedeb"/><rect x="144" y="60" width="12" height="12" fill="#f8f8f8"/><rect x="324" y="60" width="12" height="12" fill="#e4e2e2"/><rect x="336" y="60" width="12" height="12" fill="#e8eae8"/><rect x="348" y="60" width="12" height="12" fill="#ececec"/><rect x="360" y="60" width="12" height="12" fill="#f0f0f0"/><rect x="852" y="60" width="12" height="12" fill="#ececec"/><rect x="864" y="60" width="12" height="12" fill="#ececec"/><rect x="876" y="60" width="12" height="12" fill="#ececec"/><rect x="1008" y="60" width="12" height="12" fill="#fcfcfc"/><rect x="1020" y="60" width="12" height="12" fill="#e8e8e8"/><rect x="1032" y="60" width="12" height="12" fill="#e8e8e8"/><rect x="1044" y="60" width="12" height="12" fill="#f0f0ee"/><rect x="1056" y="60" width="12" height="12" fill="#fcfcfc"/><rect x="1188" y="60" width="12" height="12" fill="#f4f4f4"/><rect x="1200" y="60" width="12" height="12" fill="#e8e8e8"/><rect x="1212" y="60" width="12" height="12" fill="#ececec"/><rect x="1224" y="60" width="12" height="12" fill="#f0f0f0"/><rect x="1356" y="60" width="12" height="12" fill="#f8f8f8"/><rect x="1368" y="60" width="12" height="12" fill="#e8e8e8"/><rect x="1380" y="60" width="12" height="12" fill="#ececec"/><rect x="1392" y="60" width="12" height="12" fill="#ececec"/><rect x="12" y="72" width="12" height="12" fill="#e0e0e0"/><rect x="24" y="72" width="12" height="12" fill="#e0e0de"/><rect x="36" y="72" width="12" height="12" fill="#d4d0cc"/><rect x="48" y="72" width="12" height="12" fill="#dcdcdf"/><rect x="60" y="72" width="12" height="12" fill="#dcdcdc"/><rect x="72" y="72" width="12" height="12" fill="#d4d4d4"/><rect x="84" y="72" width="12" height="12" fill="#e4e4e0"/><rect x="96" y="72" width="12" height="12" fill="#e0dedc"/><rect x="108" y="72" width="12" height="12" fill="#d4d4d4"/><rect x="120" y="72" width="12" height="12" fill="#e0e0e0"/><rect x="132" y="72" width="12" height="12" fill="#e4e6e4"/><rect x="144" y="72" width="12" height="12" fill="#f0f0f0"/><rect x="324" y="72" width="12" height="12" fill="#e0dedc"/><rect x="336" y="72" width="12" height="12" fill="#d8dcd8"/><rect x="348" y="72" width="12" height="12" fill="#d8dcd8"/><rect x="360" y="72" width="12" height="12" fill="#ececec"/><rect x="528" y="72" width="12" height="12" fill="#f8f8f8"/><rect x="708" y="72" width="12" height="12" fill="#f8f8f8"/><rect x="840" y="72" width="12" height="12" fill="#fcfcf8"/><rect x="852" y="72" width="12" height="12" fill="#d8d8d8"/><rect x="864" y="72" width="12" height="12" fill="#dcdcdc"/><rect x="876" y="72" width="12" height="12" fill="#dcdcdc"/><rect x="1008" y="72" width="12" height="12" fill="#f8f8f4"/><rect x="1020" y="72" width="12" height="12" fill="#d0d0d0"/><rect x="1032" y="72" width="12" height="12" fill="#e0e0e0"/><rect x="1044" y="72" width="12" height="12" fill="#d4d4d4"/><rect x="1056" y="72" width="12" height="12" fill="#f4f4f4"/><rect x="1188" y="72" width="12" height="12" fill="#e4e4e0"/><rect x="1200" y="72" width="12" height="12" fill="#e8e8e8"/><rect x="1212" y="72" width="12" height="12" fill="#ececec"/><rect x="1224" y="72" width="12" height="12" fill="#ececec"/><rect x="1356" y="72" width="12" height="12" fill="#f4f4f4"/><rect x="1368" y="72" width="12" height="12" fill="#dcdcdc"/><rect x="1380" y="72" width="12" height="12" fill="#e8e8e8"/><rect x="1392" y="72" width="12" height="12" fill="#d8d8d8"/><rect x="12" y="96" width="12" height="12" fill="#d8d8dc"/><rect x="24" y="96" width="12" height="12" fill="#d8d8dc"/><rect x="36" y="96" width="12" height="12" fill="#d4d4d8"/><rect x="48" y="96" width="12" height="12" fill="#dcdce0"/><rect x="60" y="96" width="12" height="12" fill="#dcdce0"/><rect x="72" y="96" width="12" height="12" fill="#d4d4d8"/><rect x="84" y="96" width="12" height="12" fill="#d8d8dc"/><rect x="96" y="96" width="12" height="12" fill="#dcdcdc"/><rect x="108" y="96" width="12" height="12" fill="#ececf0"/><rect x="324" y="96" width="12" height="12" fill="#e4e0e4"/><rect x="336" y="96" width="12" height="12" fill="#ccccd4"/><rect x="348" y="96" width="12" height="12" fill="#c8c8d0"/><rect x="360" y="96" width="12" height="12" fill="#d4d4dc"/><rect x="504" y="96" width="12" height="12" fill="#d4d4d8"/><rect x="516" y="96" width="12" height="12" fill="#e4e4e8"/><rect x="528" y="96" width="12" height="12" fill="#d8d8dc"/><rect x="672" y="96" width="12" height="12" fill="#e4e4e8"/><rect x="684" y="96" width="12" height="12" fill="#ccccd0"/><rect x="696" y="96" width="12" height="12" fill="#d8d8dc"/><rect x="708" y="96" width="12" height="12" fill="#e4e4e8"/><rect x="852" y="96" width="12" height="12" fill="#d0d0d4"/><rect x="864" y="96" width="12" height="12" fill="#d4d4d8"/><rect x="876" y="96" width="12" height="12" fill="#d4d4d8"/><rect x="1020" y="96" width="12" height="12" fill="#e4e4e4"/><rect x="1032" y="96" width="12" height="12" fill="#d8dce0"/><rect x="1044" y="96" width="12" height="12" fill="#d0d0d4"/><rect x="1056" y="96" width="12" height="12" fill="#e4e4e8"/><rect x="1188" y="96" width="12" height="12" fill="#ececf0"/><rect x="1200" y="96" width="12" height="12" fill="#ccccd0"/><rect x="1212" y="96" width="12" height="12" fill="#d0d0d4"/><rect x="1224" y="96" width="12" height="12" fill="#dcdde0"/><rect x="1368" y="96" width="12" height="12" fill="#e4e4e4"/><rect x="1380" y="96" width="12" height="12" fill="#d8d8e4"/><rect x="1392" y="96" width="12" height="12" fill="#c8c8cc"/><rect x="12" y="108" width="12" height="12" fill="#dcdce0"/><rect x="24" y="108" width="12" height="12" fill="#dcdce0"/><rect x="36" y="108" width="12" height="12" fill="#d8d8dc"/><rect x="48" y="108" width="12" height="12" fill="#dcdce0"/><rect x="60" y="108" width="12" height="12" fill="#e0e0e4"/><rect x="72" y="108" width="12" height="12" fill="#d8d8dc"/><rect x="84" y="108" width="12" height="12" fill="#dcdce0"/><rect x="96" y="108" width="12" height="12" fill="#d0d0d4"/><rect x="108" y="108" width="12" height="12" fill="#ececf0"/><rect x="324" y="108" width="12" height="12" fill="#e8e8ec"/><rect x="336" y="108" width="12" height="12" fill="#dcdce4"/><rect x="348" y="108" width="12" height="12" fill="#e0e0e4"/><rect x="360" y="108" width="12" height="12" fill="#e0e0e8"/><rect x="504" y="108" width="12" height="12" fill="#e0e0e4"/><rect x="516" y="108" width="12" height="12" fill="#e8e8ec"/><rect x="528" y="108" width="12" height="12" fill="#dcdce0"/><rect x="672" y="108" width="12" height="12" fill="#ececf0"/><rect x="684" y="108" width="12" height="12" fill="#d8d8dc"/><rect x="696" y="108" width="12" height="12" fill="#dcdce0"/><rect x="708" y="108" width="12" height="12" fill="#e8e8ec"/><rect x="852" y="108" width="12" height="12" fill="#e4e4e8"/><rect x="864" y="108" width="12" height="12" fill="#dcdce0"/><rect x="876" y="108" width="12" height="12" fill="#dcdce0"/><rect x="1020" y="108" width="12" height="12" fill="#ececf0"/><rect x="1032" y="108" width="12" height="12" fill="#e4e4e8"/><rect x="1044" y="108" width="12" height="12" fill="#dcdce0"/><rect x="1056" y="108" width="12" height="12" fill="#ececf0"/><rect x="1200" y="108" width="12" height="12" fill="#e0e0e4"/><rect x="1212" y="108" width="12" height="12" fill="#dcdce0"/><rect x="1224" y="108" width="12" height="12" fill="#e4e4e8"/><rect x="1368" y="108" width="12" height="12" fill="#ececf0"/><rect x="1380" y="108" width="12" height="12" fill="#dcdce0"/><rect x="1392" y="108" width="12" height="12" fill="#dcdce0"/><rect x="0" y="132" width="12" height="12" fill="#dcdcdc"/><rect x="12" y="132" width="12" height="12" fill="#c8c4c4"/><rect x="24" y="132" width="12" height="12" fill="#e4e2e0"/><rect x="36" y="132" width="12" height="12" fill="#c4c4c4"/><rect x="48" y="132" width="12" height="12" fill="#ccd0cc"/><rect x="60" y="132" width="12" height="12" fill="#d0d0cc"/><rect x="72" y="132" width="12" height="12" fill="#d0d0d4"/><rect x="84" y="132" width="12" height="12" fill="#c8c4c4"/><rect x="96" y="132" width="12" height="12" fill="#dce0dc"/><rect x="108" y="132" width="12" height="12" fill="#ccc8cc"/><rect x="120" y="132" width="12" height="12" fill="#f8fafc"/><rect x="324" y="132" width="12" height="12" fill="#e0dcdc"/><rect x="336" y="132" width="12" height="12" fill="#c4c4c0"/><rect x="348" y="132" width="12" height="12" fill="#d0d0d4"/><rect x="360" y="132" width="12" height="12" fill="#e8eae8"/><rect x="528" y="132" width="12" height="12" fill="#f6f6f6"/><rect x="708" y="132" width="12" height="12" fill="#f6f6f6"/><rect x="840" y="132" width="12" height="12" fill="#fcfcfc"/><rect x="852" y="132" width="12" height="12" fill="#c8cac8"/><rect x="864" y="132" width="12" height="12" fill="#d4d0cc"/><rect x="876" y="132" width="12" height="12" fill="#e0e0e0"/><rect x="1224" y="132" width="12" height="12" fill="#f8f8f8"/><rect x="1392" y="132" width="12" height="12" fill="#fcfcfc"/><rect x="0" y="168" width="12" height="12" fill="#dcdcdc"/><rect x="12" y="168" width="12" height="12" fill="#c4c8cc"/><rect x="24" y="168" width="12" height="12" fill="#c8c8cc"/><rect x="36" y="168" width="12" height="12" fill="#c8c8cc"/><rect x="48" y="168" width="12" height="12" fill="#bcbac0"/><rect x="60" y="168" width="12" height="12" fill="#d4d4d8"/><rect x="72" y="168" width="12" height="12" fill="#d8dadc"/><rect x="84" y="168" width="12" height="12" fill="#c4c4c4"/><rect x="96" y="168" width="12" height="12" fill="#c8c8c8"/><rect x="108" y="168" width="12" height="12" fill="#c0c0c4"/><rect x="120" y="168" width="12" height="12" fill="#f0f0f4"/><rect x="324" y="168" width="12" height="12" fill="#d8d8dc"/><rect x="336" y="168" width="12" height="12" fill="#c4c4cc"/><rect x="348" y="168" width="12" height="12" fill="#ccccd0"/><rect x="360" y="168" width="12" height="12" fill="#d0d0d4"/><rect x="504" y="168" width="12" height="12" fill="#d4d4d4"/><rect x="516" y="168" width="12" height="12" fill="#c4c0c0"/><rect x="528" y="168" width="12" height="12" fill="#c4c8cc"/><rect x="684" y="168" width="12" height="12" fill="#b4b4b8"/><rect x="696" y="168" width="12" height="12" fill="#c8c8c8"/><rect x="708" y="168" width="12" height="12" fill="#dcdee4"/><rect x="852" y="168" width="12" height="12" fill="#d8d8dc"/><rect x="864" y="168" width="12" height="12" fill="#e0dedc"/><rect x="876" y="168" width="12" height="12" fill="#d0d4dc"/><rect x="1020" y="168" width="12" height="12" fill="#ececec"/><rect x="1032" y="168" width="12" height="12" fill="#b8b8bc"/><rect x="1044" y="168" width="12" height="12" fill="#c0c0c0"/><rect x="1056" y="168" width="12" height="12" fill="#dcdfe4"/><rect x="1200" y="168" width="12" height="12" fill="#d4d4d4"/><rect x="1212" y="168" width="12" height="12" fill="#c8c8cc"/><rect x="1224" y="168" width="12" height="12" fill="#d4d4d8"/><rect x="1392" y="168" width="12" height="12" fill="#ececf0"/><rect x="12" y="192" width="12" height="12" fill="#fcfcfc"/><rect x="24" y="192" width="12" height="12" fill="#fcfcfc"/><rect x="36" y="192" width="12" height="12" fill="#ececec"/><rect x="48" y="192" width="12" height="12" fill="#fcfcfc"/><rect x="60" y="192" width="12" height="12" fill="#fcfcfc"/><rect x="72" y="192" width="12" height="12" fill="#fcfcfc"/><rect x="84" y="192" width="12" height="12" fill="#fcfaf8"/><rect x="96" y="192" width="12" height="12" fill="#f0f2f0"/><rect x="108" y="192" width="12" height="12" fill="#f4f4f4"/><rect x="120" y="192" width="12" height="12" fill="#fefefe"/><rect x="132" y="192" width="12" height="12" fill="#f0f0f0"/><rect x="144" y="192" width="12" height="12" fill="#f8f8f8"/><rect x="336" y="192" width="12" height="12" fill="#ececec"/><rect x="348" y="192" width="12" height="12" fill="#e8e8e8"/><rect x="360" y="192" width="12" height="12" fill="#f8f8f8"/><rect x="528" y="192" width="12" height="12" fill="#f8f8f8"/><rect x="1020" y="192" width="12" height="12" fill="#f4f4f4"/><rect x="1032" y="192" width="12" height="12" fill="#eceeec"/><rect x="1044" y="192" width="12" height="12" fill="#f0eeec"/><rect x="1056" y="192" width="12" height="12" fill="#fcfcfc"/><rect x="1200" y="192" width="12" height="12" fill="#fcfcf8"/><rect x="1212" y="192" width="12" height="12" fill="#ececea"/><rect x="1224" y="192" width="12" height="12" fill="#f4f4f8"/><rect x="12" y="204" width="12" height="12" fill="#ccd0d0"/><rect x="24" y="204" width="12" height="12" fill="#d4d4d4"/><rect x="36" y="204" width="12" height="12" fill="#d0d0d0"/><rect x="48" y="204" width="12" height="12" fill="#e4e2dc"/><rect x="60" y="204" width="12" height="12" fill="#d0d0d0"/><rect x="72" y="204" width="12" height="12" fill="#d4d4d8"/><rect x="84" y="204" width="12" height="12" fill="#d8dcdc"/><rect x="96" y="204" width="12" height="12" fill="#d0ccc8"/><rect x="108" y="204" width="12" height="12" fill="#e0e4e4"/><rect x="120" y="204" width="12" height="12" fill="#d4d4d4"/><rect x="132" y="204" width="12" height="12" fill="#d4d4d4"/><rect x="144" y="204" width="12" height="12" fill="#c8c8cc"/><rect x="156" y="204" width="12" height="12" fill="#e4e4e8"/><rect x="168" y="204" width="12" height="12" fill="#d4d4d4"/><rect x="180" y="204" width="12" height="12" fill="#d8d8d4"/><rect x="192" y="204" width="12" height="12" fill="#e4e4e8"/><rect x="336" y="204" width="12" height="12" fill="#e0e0dc"/><rect x="348" y="204" width="12" height="12" fill="#dcdcdc"/><rect x="360" y="204" width="12" height="12" fill="#f4f4f4"/><rect x="708" y="204" width="12" height="12" fill="#f8f8f8"/><rect x="864" y="204" width="12" height="12" fill="#f8f8f8"/><rect x="1020" y="204" width="12" height="12" fill="#f4f4f4"/><rect x="1032" y="204" width="12" height="12" fill="#d8d8d8"/><rect x="1044" y="204" width="12" height="12" fill="#e4e4e4"/><rect x="1056" y="204" width="12" height="12" fill="#f8f8f8"/><rect x="1200" y="204" width="12" height="12" fill="#fafaf8"/><rect x="1212" y="204" width="12" height="12" fill="#d8d8d8"/><rect x="1224" y="204" width="12" height="12" fill="#e8e8ec"/><rect x="1392" y="204" width="12" height="12" fill="#fcfcfc"/></svg>
<div class="a" style="left:1661px;top:683px;width:16px;height:231px;background:#f1f1f1"></div>
<div class="a" style="left:1663px;top:700px;width:12px;height:135px;background:#c1c1c1"></div>
<div class="a" style="left:1665px;top:689px;width:0;height:0;border-left:4px solid transparent;border-right:4px solid transparent;border-bottom:5px solid #505050"></div>
<div class="a" style="left:1665px;top:910px;width:0;height:0;border-left:4px solid transparent;border-right:4px solid transparent;border-top:5px solid #505050"></div>
<div class="a" style="left:231px;top:914px;width:1446px;height:9px;background:#f3f4f7;border-top:1px solid #e6e8ee;border-bottom:1px solid #d5d9e3"></div>
<div class="a" style="left:251px;top:938px;font-size:12px;color:#888">Total items:&nbsp; 19</div>
<div class="a" style="left:1333px;top:937px;font-size:12.5px;color:#222">10</div>
<div class="a tri" style="left:1351px;top:941px;border-top-color:#777"></div>
<div class="a" style="left:1367px;top:937px;font-size:12.5px;color:#aaa">/ page</div>
<div class="a" style="left:1422px;top:930px;width:235px;height:26px;border:1px solid #cfd5de;background:#fff"></div>
<div class="a" style="left:1423px;top:931px;width:24px;height:24px;background:#eceef2;border-right:1px solid #cfd5de"></div>
<div class="a" style="left:1447px;top:931px;width:25px;height:24px;background:#eceef2;border-right:1px solid #cfd5de"></div>
<div class="a" style="left:1472px;top:931px;width:64px;height:24px;background:#fff;border-right:1px solid #cfd5de"></div>
<div class="a" style="left:1536px;top:931px;width:70px;height:24px;background:#f3f4f7;border-right:1px solid #cfd5de"></div>
<div class="a" style="left:1606px;top:931px;width:25px;height:24px;background:#fff;border-right:1px solid #cfd5de"></div>
<div class="a" style="left:1631px;top:931px;width:26px;height:24px;background:#fff;border-right:1px solid #cfd5de"></div>
<div class="a" style="left:1472px;top:937px;width:64px;text-align:center;font-size:12.5px;color:#222">1</div>
<div class="a" style="left:1536px;top:937px;width:70px;text-align:center;font-size:12.5px;color:#222">/ 2 pages</div>
<svg class="a" style="left:1429px;top:936px" width="12" height="14" viewBox="0 0 12 14" fill="#b8bcc4"><rect x="2" y="3" width="1.5" height="8"/><path d="M9.5 3v8L4.5 7z"/></svg>
<svg class="a" style="left:1454px;top:936px" width="12" height="14" viewBox="0 0 12 14" fill="#b8bcc4"><path d="M8 3v8L3.5 7z"/></svg>
<svg class="a" style="left:1613px;top:936px" width="12" height="14" viewBox="0 0 12 14" fill="#555"><path d="M4 3v8L8.5 7z"/></svg>
<svg class="a" style="left:1638px;top:936px" width="12" height="14" viewBox="0 0 12 14" fill="#555"><path d="M2.5 3v8L7.5 7z"/><rect x="8.5" y="3" width="1.5" height="8"/></svg>
<div class="a flab" style="top:179px">Subproduct</div>
<div class="a finc" style="top:179px">Include only</div>
<div class="a finp" style="top:199px"><span>All</span></div>
<div class="a flab" style="top:240px">Component Type</div>
<div class="a finc" style="top:240px">Include only</div>
<div class="a finp" style="top:260px"><span>All</span></div>
<div class="a flab" style="top:301px">Component Name</div>
<div class="a finc" style="top:301px">Include only</div>
<div class="a finp" style="top:321px"><span>All</span></div>
<div class="a flab" style="top:362px">Resource ID</div>
<div class="a finc" style="top:362px">Include only</div>
<div class="a finp" style="top:382px"><span>All</span></div>
<div class="a flab" style="top:423px">Region</div>
<div class="a finc" style="top:423px">Include only</div>
<div class="a finp" style="top:443px"><span>All</span></div>
<div class="a flab" style="top:484px">Availability Zone</div>
<div class="a finc" style="top:484px">Include only</div>
<div class="a finp" style="top:504px"><span>All</span></div>
<div class="a flab" style="top:545px">Billing Mode</div>
<div class="a finc" style="top:545px">Include only</div>
<div class="a finp" style="top:565px"><span>All</span></div>
<div class="a flab" style="top:606px">Transaction Type</div>
<div class="a finc" style="top:606px">Include only</div>
<div class="a finp" style="top:626px"><span>All</span></div>
<div class="a flab" style="top:667px">Tag</div>
<div class="a finc" style="top:667px">Include only</div>
<div class="a finp" style="top:687px"><span>All</span></div>
<div class="a flab" style="top:728px">Project Name</div>
<div class="a finc" style="top:728px">Include only</div>
<div class="a finp" style="top:748px"><span>All</span></div>
<div class="a flab" style="top:789px">Payer Account</div>
<div class="a finc" style="top:789px">Include only</div>
<div class="a finp" style="top:809px"><span>All</span></div>
<div class="a flab" style="top:850px">Owner Account</div>
<div class="a finc" style="top:850px">Include only</div>
<div class="a finp" style="top:870px"><span>All</span></div>
<div class="a" style="left:633px;top:169px;width:230px;height:165px;background:#fff;box-shadow:0 2px 14px rgba(0,0,0,0.13);overflow:hidden"><div class="a" style="left:213px;top:0;width:17px;height:165px;background:#f1f1f1"></div><div class="a" style="left:215px;top:103px;width:12px;height:45px;background:#c1c1c1"></div><div class="a" style="left:216px;top:7px;width:0;height:0;border-left:4px solid transparent;border-right:4px solid transparent;border-bottom:5px solid #505050"></div><div class="a" style="left:216px;top:153px;width:0;height:0;border-left:4px solid transparent;border-right:4px solid transparent;border-top:5px solid #a0a0a0"></div><div class="a" style="left:0;top:135px;width:213px;height:30px;background:#eceef2"></div><div class="a ddi" style="top:-5px">Transaction Type</div><div class="a ddi" style="top:24px">Billing Mode</div><div class="a ddi" style="top:54px">Tag</div><div class="a" style="left:197px;top:56px;width:0;height:0;border-top:4px solid transparent;border-bottom:4px solid transparent;border-left:5px solid #555"></div><div class="a ddi" style="top:84px">Project Name</div><div class="a ddi" style="top:114px">Payer Account</div><div class="a ddi" style="top:144px">Owner Account</div></div>
<div class="a" style="left:612px;top:296px;width:247px;height:48px;border:3px solid #fb1c10;border-radius:3px"></div>
<div class="a" style="left:1693px;top:836px;width:207px;height:74px;border:3px solid #fb1c10;border-radius:3px"></div>
</body></html>
